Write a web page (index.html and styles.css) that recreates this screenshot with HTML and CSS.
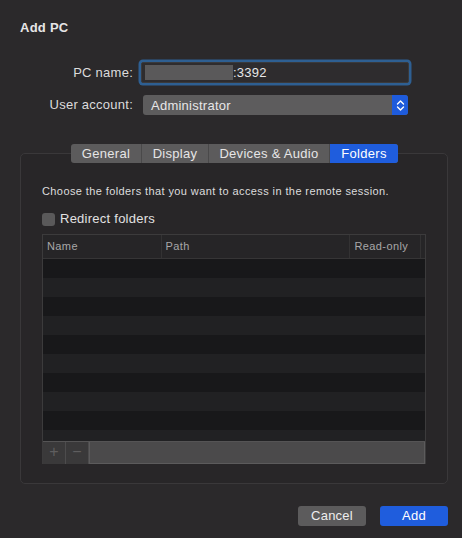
FILE: index.html
```html
<!DOCTYPE html>
<html>
<head>
<meta charset="utf-8">
<link rel="stylesheet" href="styles.css">
</head>
<body>
<div class="window">
  <div class="title">Add PC</div>
  <div class="form">
    <label class="lbl">PC name:</label>
    <div class="input"><span class="redact"></span><span class="port">:3392</span></div>
    <label class="lbl">User account:</label>
    <div class="select"><span class="sel-text">Administrator</span>
      <span class="stepper"><svg width="9" height="13" viewBox="0 0 9 13"><path d="M1.5 5 L4.5 2 L7.5 5 M1.5 8 L4.5 11 L7.5 8" fill="none" stroke="#fff" stroke-width="1.4" stroke-linecap="round" stroke-linejoin="round"/></svg></span>
    </div>
  </div>
  <div class="group">
    <div class="tabs">
      <span class="tab t-general">General</span>
      <span class="tab t-display">Display</span>
      <span class="tab t-devices">Devices &amp; Audio</span>
      <span class="tab t-folders active">Folders</span>
    </div>
    <p class="desc">Choose the folders that you want to access in the remote session.</p>
    <div class="check-row"><span class="checkbox"></span><span>Redirect folders</span></div>
    <div class="table">
      <div class="thead">
        <span class="th c-name">Name</span>
        <span class="th c-path">Path</span>
        <span class="th c-ro">Read-only</span>
        <span class="th c-rest"></span>
      </div>
      <div class="tbody">
        <div class="row"></div><div class="row alt"></div><div class="row"></div><div class="row alt"></div><div class="row"></div><div class="row alt"></div><div class="row"></div><div class="row alt"></div><div class="row"></div><div class="row alt short"></div>
      </div>
      <div class="tfoot">
        <span class="fbtn">+</span><span class="fbtn">−</span><span class="fbar"></span>
      </div>
    </div>
  </div>
  <div class="buttons">
    <span class="btn cancel">Cancel</span>
    <span class="btn add">Add</span>
  </div>
</div>
</body>
</html>
```
FILE: styles.css
```css
html, body {
  margin: 0;
  padding: 0;
  background: #2b292b;
}
body {
  width: 462px;
  height: 538px;
  overflow: hidden;
  font-family: "Liberation Sans", Arial, sans-serif;
  color: #e4e3e4;
  font-size: 13px;
  letter-spacing: 0.25px;
}
.window {
  display: flex;
  flex-direction: column;
  height: 538px;
}
.title {
  font-weight: bold;
  font-size: 13px;
  padding: 20px 0 0 20px;
  line-height: 16px;
  color: #e6e5e6;
}
.form {
  display: grid;
  grid-template-columns: 133px 268px;
  grid-auto-rows: auto;
  row-gap: 12px;
  column-gap: 8px;
  margin-top: 26px;
  align-items: center;
}
.lbl {
  text-align: right;
  line-height: 16px;
  color: #dcdbdc;
}
.input {
  height: 21px;
  box-sizing: border-box;
  width: 268px;
  border: 1px solid #3a3a3c;
  box-shadow: 0 0 0 2.5px #2e5f92;
  border-radius: 2px;
  background: #2e2c2e;
  display: flex;
  align-items: center;
  padding-left: 3px;
}
.redact {
  width: 88px;
  height: 15px;
  background: #5a595a;
}
.port {
  color: #e8e7e8;
}
.select {
  height: 20px;
  width: 265px;
  margin-left: 2px;
  box-sizing: border-box;
  background: #5d5c5d;
  border-radius: 3px;
  display: flex;
  align-items: center;
  justify-content: space-between;
  padding-left: 8px;
  color: #e8e7e8;
}
.stepper {
  width: 16px;
  height: 20px;
  background: #1e5bdc;
  border-radius: 0 3px 3px 0;
  display: flex;
  align-items: center;
  justify-content: center;
}
.group {
  margin: 38px 14px 0 20px;
  height: 331px;
  box-sizing: border-box;
  border: 1px solid #3a383a;
  border-radius: 5px;
  background: #282628;
  display: flex;
  flex-direction: column;
  padding: 0 21px 0 21px;
}
.tabs {
  display: flex;
  align-self: center;
  margin-top: -10px;
  margin-left: 1px;
  height: 19px;
  border-radius: 3px;
  overflow: hidden;
  background: #5c5b5c;
}
.tab {
  line-height: 19px;
  box-sizing: border-box;
  color: #e6e5e6;
  border-right: 1px solid #4a494a;
  text-align: center;
  white-space: nowrap;
  letter-spacing: 0.3px;
}
.t-general { width: 71px; }
.t-display { width: 67px; }
.t-devices { width: 121px; }
.t-folders { width: 68px; }
.tab.active {
  background: #1f5ddd;
  color: #fff;
  border-right: 0;
}
.desc {
  margin: 21px 0 0 0;
  font-size: 11px;
  letter-spacing: 0.4px;
  line-height: 14px;
  color: #dddcdd;
}
.check-row {
  display: flex;
  align-items: center;
  margin-top: 13px;
  line-height: 16px;
  color: #e2e1e2;
}
.checkbox {
  width: 13px;
  height: 13px;
  border-radius: 3px;
  background: #5a595a;
  margin-right: 5px;
}
.table {
  margin-top: 7px;
  width: 384px;
  border: 1px solid #3c3b3c;
  border-bottom: 0;
  box-sizing: border-box;
  display: flex;
  flex-direction: column;
}
.thead {
  display: flex;
  height: 23px;
  background: #262527;
  border-bottom: 1px solid #363536;
}
.th {
  font-size: 11px;
  letter-spacing: 0.4px;
  color: #a8a7a8;
  line-height: 22px;
  padding-left: 4px;
  box-sizing: border-box;
  border-right: 1px solid #333233;
}
.c-name { width: 121px; }
.c-path { width: 193px; }
.c-ro { width: 72px; }
.c-rest { flex: 1; border-right: 0; }
.tbody {
  display: flex;
  flex-direction: column;
  height: 182px;
  overflow: hidden;
}
.row {
  height: 19px;
  flex: none;
  background: #18181a;
}
.row.alt {
  background: #212123;
}
.tfoot {
  display: flex;
  height: 22px;
  border-top: 1px solid #555455;
  background: #3a393a;
}
.fbtn {
  width: 22px;
  text-align: center;
  line-height: 20px;
  font-size: 16px;
  color: #5f5e5f;
  border-right: 1px solid #4d4c4d;
}
.fbar {
  flex: 1;
  background: #4b4a4b;
  border-left: 1px solid #5c5b5c;
  border-right: 1px solid #5c5b5c;
  border-bottom: 1px solid #5c5b5c;
}
.buttons {
  display: flex;
  justify-content: flex-end;
  gap: 14px;
  margin: 22px 14px 0 0;
}
.btn {
  height: 20px;
  line-height: 20px;
  width: 68px;
  text-align: center;
  border-radius: 3px;
  color: #eeedee;
}
.cancel {
  background: #5c5b5c;
}
.add {
  background: #1f5ddd;
  color: #fff;
}
```
